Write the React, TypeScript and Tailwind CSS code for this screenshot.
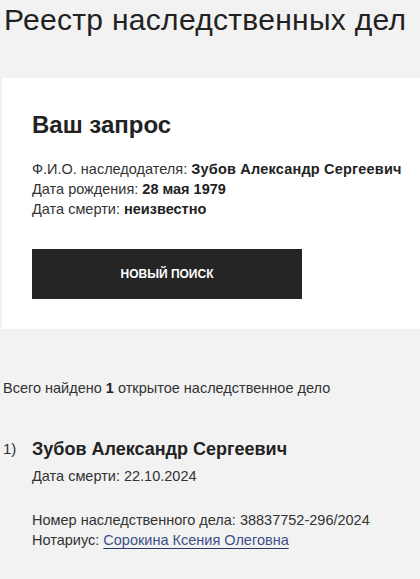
export default function App() {
  return (
    <div className="min-h-[579px] bg-[#f2f2f2] pb-8 font-['Liberation_Sans',Arial,sans-serif] text-[#222]">
      <h1 className="whitespace-nowrap pl-[4px] pt-[2px] text-[30px] leading-[36px] font-normal tracking-[0.3px]">
        Реестр наследственных дел
      </h1>

      <div className="ml-[2px] mt-[40px] bg-white pl-[30px] pr-[8px] pt-[33px] pb-[30px]">
        <h2 className="text-[24px] leading-[1.2] font-bold">Ваш запрос</h2>
        <div className="mt-[19px] text-[14.5px] leading-[20px] text-[#333]">
          <p className="whitespace-nowrap">
            Ф.И.О. наследодателя: <b className="text-[#222] tracking-[0.2px]">Зубов Александр Сергеевич</b>
          </p>
          <p>
            Дата рождения: <b className="text-[#222]">28 мая 1979</b>
          </p>
          <p>
            Дата смерти: <b className="text-[#222]">неизвестно</b>
          </p>
        </div>
        <button className="mt-[30px] flex h-[50px] w-[270px] items-center justify-center bg-[#252525] text-[12px] font-bold text-white">
          НОВЫЙ ПОИСК
        </button>
      </div>

      <p className="mt-[49px] pl-[3px] text-[14.5px] leading-[20px] text-[#333]">
        Всего найдено <b className="text-[#222]">1</b> открытое наследственное дело
      </p>

      <div className="mt-[39px] flex pl-[3px]">
        <span className="w-[29px] text-[15px] leading-[24px] text-[#333]">1)</span>
        <div>
          <h3 className="text-[18px] leading-[24px] font-bold">Зубов Александр Сергеевич</h3>
          <p className="mt-[5px] text-[14.5px] leading-[20px] text-[#333]">Дата смерти: 22.10.2024</p>
          <div className="mt-[24px] text-[14.5px] leading-[20px] text-[#333]">
            <p>Номер наследственного дела: 38837752-296/2024</p>
            <p>
              Нотариус:{' '}
              <a href="#" className="text-[#3d5185] underline decoration-[#2a3a66] underline-offset-[3px]">
                Сорокина Ксения Олеговна
              </a>
            </p>
          </div>
        </div>
      </div>
    </div>
  );
}
